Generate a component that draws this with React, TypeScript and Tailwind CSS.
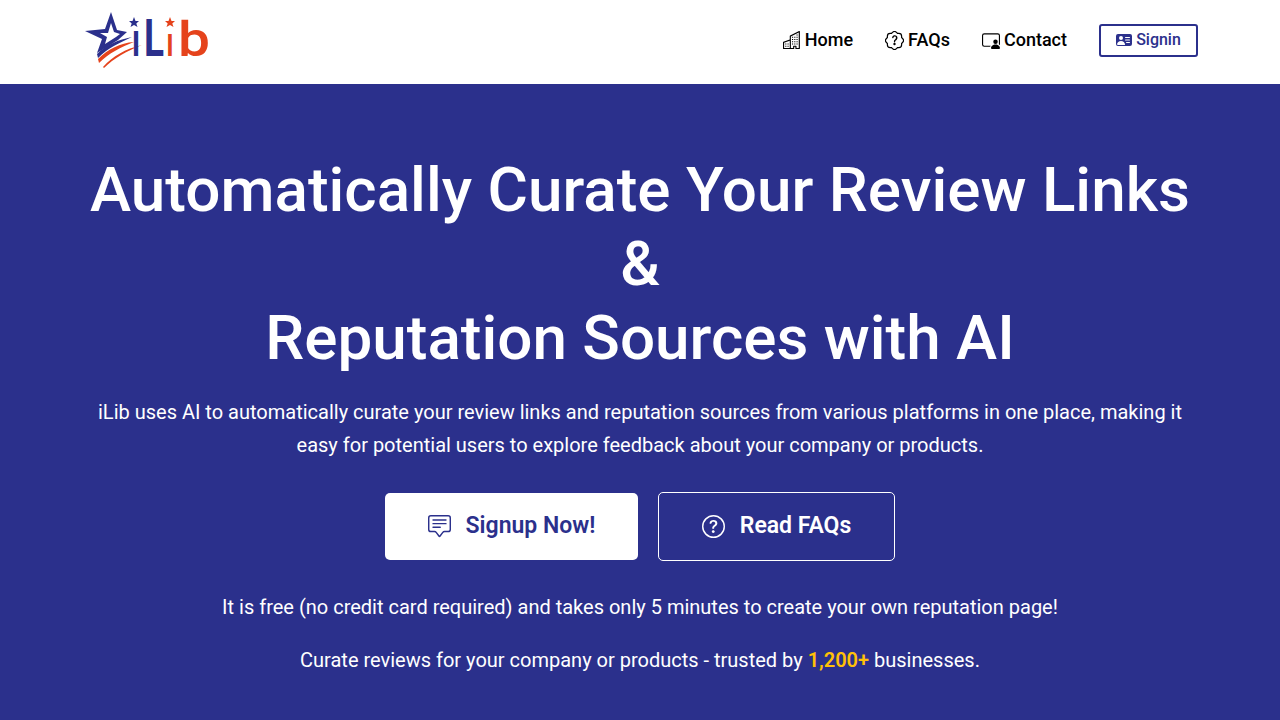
import {
  BsBuildings,
  BsPatchQuestion,
  BsPersonVideo3,
  BsPersonVcardFill,
  BsChatSquareText,
  BsQuestionCircle,
} from "react-icons/bs";

/* iLib logo: star + swooshes are drawn, the word stays text */
function Logo() {
  return (
    <svg width="126" height="60" viewBox="85 12 126 60" className="block">
      <path
        fillRule="evenodd"
        d="M111 14 L117 32 L127 34 L118 42 L97 55 L102 41 L85 33 L105 31 Z M111 25 L108 35 L100 35 L107 39 L105 46 L116 39 L120 36 L114 34 Z"
        fill="#2b308c"
      />
      <path d="M97 56 C107 46 118 42 132 39 C119 45 108 50 98 60 Z" fill="#2b308c" />
      <path d="M98 61 C108 51 120 45 134 44 C121 49 109 55 99 65 Z" fill="#e5431c" />
      <path d="M103 69 C113 58 125 51 142 47 C127 53 114 60 104 70 Z" fill="#e5431c" />
      <path d="M134 19 L135.5 23 L139 23 L136.3 25.500 L137.500 29 L134 27 L130.500 29 L131.700 25.500 L129 23 L132.500 23 Z" fill="#2b308c" />
      <path d="M170 19 L171.500 23 L175 23 L172.300 25.500 L173.500 29 L170 27 L166.500 29 L167.700 25.500 L165 23 L168.500 23 Z" fill="#e5431c" />
      <text x="132" y="58" fontFamily="Roboto, sans-serif" fontWeight="700" fontSize="46" fill="#2b308c" textLength="8" lengthAdjust="spacingAndGlyphs">
        ı
      </text>
      <text x="144" y="58" fontFamily="Roboto, sans-serif" fontWeight="700" fontSize="51" fill="#2b308c" textLength="20" lengthAdjust="spacingAndGlyphs">
        L
      </text>
      <text x="166" y="58" fontFamily="Roboto, sans-serif" fontWeight="500" fontSize="40" fill="#e5431c" textLength="8" lengthAdjust="spacingAndGlyphs">
        ı
      </text>
      <text x="178" y="58" fontFamily="Roboto, sans-serif" fontWeight="500" fontSize="48" fill="#e5431c" textLength="32" lengthAdjust="spacingAndGlyphs">
        b
      </text>
    </svg>
  );
}

function NavLink({ icon, label }: { icon: React.ReactNode; label: string }) {
  return (
    <a className="flex items-center gap-[4px] text-[18px] leading-[24px] font-medium text-black">
      {icon}
      {label}
    </a>
  );
}

export default function App() {
  return (
    <div className="h-[720px] overflow-hidden bg-[#2b308c] font-['Roboto',sans-serif]">
      <header className="flex h-[84px] items-center justify-between bg-white pb-[4px] pl-[85px] pr-[82px]">
        <Logo />
        <nav className="flex items-center gap-[32px]">
          <NavLink icon={<BsBuildings size={18} />} label="Home" />
          <NavLink icon={<BsPatchQuestion size={19} />} label="FAQs" />
          <NavLink icon={<BsPersonVideo3 size={18} />} label="Contact" />
          <a className="flex h-[33px] w-[99px] items-center justify-center gap-[4px] rounded-[3px] border-2 border-[#2b308c] text-[16px] font-medium text-[#2b308c]">
            <BsPersonVcardFill size={16} />
            Signin
          </a>
        </nav>
      </header>

      <main className="flex flex-col items-center px-[85px] pt-[69px] text-center text-white">
        <h1 className="text-[62px] leading-[74px] font-medium">
          Automatically Curate Your Review Links
          <br />
          &amp;
          <br />
          Reputation Sources with AI
        </h1>
        <p className="mt-[21px] text-[20px] leading-[33px]">
          iLib uses AI to automatically curate your review links and reputation sources from various platforms in one
          place, making it easy for potential users to explore feedback about your company or products.
        </p>
        <div className="mt-[30px] flex items-center gap-[20px]">
          <a className="flex h-[67px] w-[253px] items-center justify-center gap-[15px] rounded-[5px] bg-white text-[23px] font-semibold text-[#2b308c]">
            <BsChatSquareText size={23} />
            Signup Now!
          </a>
          <a className="flex h-[69px] w-[237px] items-center justify-center gap-[15px] rounded-[5px] border border-white text-[23px] font-semibold text-white">
            <BsQuestionCircle size={23} />
            Read FAQs
          </a>
        </div>
        <p className="mt-[30px] text-[20px] leading-[33px]">
          It is free (no credit card required) and takes only 5 minutes to create your own reputation page!
        </p>
        <p className="mt-[20px] text-[20px] leading-[33px]">
          Curate reviews for your company or products - trusted by{" "}
          <span className="font-semibold text-[#ffc107]">1,200+</span> businesses.
        </p>
      </main>
    </div>
  );
}
